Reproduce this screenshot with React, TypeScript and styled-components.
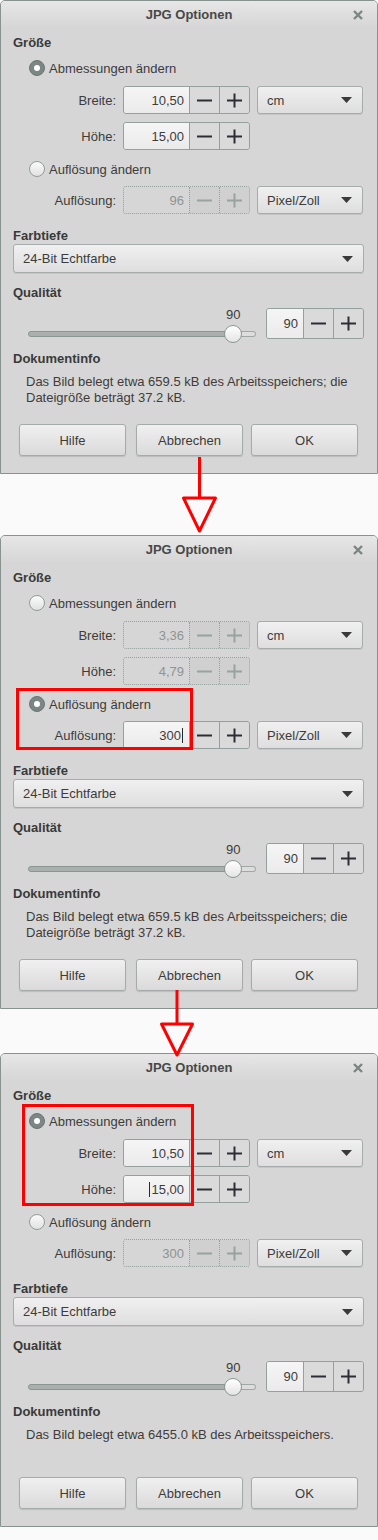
import styled, { createGlobalStyle } from "styled-components";

const GlobalStyle = createGlobalStyle`
  html, body {
    margin: 0;
    padding: 0;
    background: #fafafa;
  }
  body {
    font-family: "Liberation Sans", Arial, sans-serif;
    font-size: 13px;
    color: #3c3c3c;
  }
`;

type Box = { left: number; top: number; width: number; height: number };

type DialogState = {
  mode: "size" | "res";
  width: string;
  height: string;
  res: string;
  caret?: "height" | "res";
  info: string;
  highlight?: Box;
};

const Page = styled.div`
  display: flex;
  flex-direction: column;
  width: 378px;
`;

const Window = styled.div`
  position: relative;
  box-sizing: border-box;
  flex-shrink: 0;
  display: flex;
  flex-direction: column;
  width: 378px;
  height: 474px;
  background: #d6d6d6;
  border: 1px solid #88928f;
  border-radius: 5px 5px 0 0;
`;

const TitleBar = styled.div`
  display: grid;
  grid-template-columns: 1fr auto 1fr;
  align-items: center;
  height: 27px;
  padding: 0 14px;
  border-radius: 4px 4px 0 0;
  background: linear-gradient(#e7e7e7, #dcdcdc 60%, #d6d6d6);
  font-weight: bold;
  color: #484848;

  span {
    grid-column: 2;
  }

  svg {
    justify-self: end;
  }
`;

const Body = styled.div`
  display: flex;
  flex-direction: column;
  padding: 7px 13px 0 12px;
`;

const Heading = styled.div<{ $top?: number }>`
  margin-top: ${(p) => p.$top ?? 0}px;
  line-height: 16px;
  font-weight: bold;
  color: #3a3a3a;
`;

const RadioRow = styled.label<{ $top: number }>`
  display: flex;
  align-items: center;
  gap: 4px;
  height: 18px;
  margin-top: ${(p) => p.$top}px;
  padding-left: 16px;
`;

const RadioDot = styled.span<{ $on: boolean }>`
  box-sizing: border-box;
  display: flex;
  align-items: center;
  justify-content: center;
  width: 16px;
  height: 16px;
  border-radius: 50%;
  border: 1px solid ${(p) => (p.$on ? "#6b7573" : "#939c9a")};
  background: ${(p) =>
    p.$on ? "#7c8684" : "linear-gradient(#fbfbfb, #e1e1e1)"};

  &::after {
    content: "";
    display: ${(p) => (p.$on ? "block" : "none")};
    width: 6px;
    height: 6px;
    border-radius: 50%;
    background: #ffffff;
  }
`;

const FieldRow = styled.div<{ $top: number }>`
  display: flex;
  align-items: center;
  height: 28px;
  margin-top: ${(p) => p.$top}px;
  padding-left: 36px;
`;

const FieldLabel = styled.span`
  width: 67px;
  margin-right: 7px;
  text-align: right;
`;

const Spin = styled.div<{ $off?: boolean; $h?: number }>`
  box-sizing: border-box;
  display: flex;
  flex-shrink: 0;
  height: ${(p) => p.$h ?? 28}px;
  border: 1px ${(p) => (p.$off ? "dotted" : "solid")} #93a09d;
  border-radius: 3px;
  overflow: hidden;
`;

const SpinEntry = styled.div<{ $w: number; $off?: boolean }>`
  box-sizing: border-box;
  display: flex;
  align-items: center;
  justify-content: flex-end;
  width: ${(p) => p.$w}px;
  padding-right: 5px;
  background: ${(p) =>
    p.$off ? "#d6d6d6" : "linear-gradient(#f5f5f5, #ebebeb)"};
  color: ${(p) => (p.$off ? "#8e9492" : "#3c3c3c")};
`;

const StepButton = styled.div<{ $off?: boolean }>`
  display: flex;
  align-items: center;
  justify-content: center;
  width: 29px;
  border-left: 1px ${(p) => (p.$off ? "dotted" : "solid")} #93a09d;
  background: ${(p) => (p.$off ? "#cfd0cf" : "#dadada")};
  color: ${(p) => (p.$off ? "#98a2a0" : "#2d2d36")};
`;

const Caret = styled.span`
  display: inline-block;
  width: 1px;
  height: 15px;
  margin: 0 1px;
  background: #2a2a2a;
`;

const Combo = styled.div<{ $w?: number; $h?: number; $gap?: number }>`
  box-sizing: border-box;
  display: flex;
  align-items: center;
  justify-content: space-between;
  width: ${(p) => (p.$w ? `${p.$w}px` : "100%")};
  height: ${(p) => p.$h ?? 28}px;
  margin-left: ${(p) => p.$gap ?? 0}px;
  padding: 0 10px 0 9px;
  border: 1px solid #a6acab;
  border-radius: 3px;
  background: linear-gradient(#f0f0f0, #dedede);
  box-shadow: 0 1px 0 rgba(0, 0, 0, 0.08);
`;

const ScaleRow = styled.div`
  display: flex;
  align-items: flex-start;
  margin-top: 6px;
`;

const Scale = styled.div`
  display: flex;
  flex-direction: column;
  width: 228px;
  margin-left: 15px;
`;

const ScaleValue = styled.div`
  height: 16px;
  line-height: 16px;

  span {
    display: inline-block;
    transform: translateX(-50%);
  }
`;

const TrackArea = styled.div`
  position: relative;
  display: flex;
  align-items: center;
  height: 22px;
`;

const Track = styled.div`
  display: flex;
  width: 100%;
  height: 6px;
`;

const TrackFill = styled.div`
  box-sizing: border-box;
  background: #a9b0ae;
  border: 1px solid #8b9593;
  border-radius: 3px 0 0 3px;
`;

const TrackRest = styled.div`
  box-sizing: border-box;
  flex: 1;
  background: #dddddd;
  border: 1px solid #a0a8a6;
  border-left: none;
  border-radius: 0 3px 3px 0;
`;

const Thumb = styled.div`
  position: absolute;
  top: 2px;
  box-sizing: border-box;
  width: 18px;
  height: 18px;
  margin-left: -9px;
  border-radius: 50%;
  border: 1px solid #8c9694;
  background: linear-gradient(#ffffff, #e4e4e4);
`;

const QualitySpin = styled(Spin)`
  margin-left: auto;
  margin-top: 1px;
`;

const InfoText = styled.p`
  min-height: 32px;
  margin: 7px 0 0;
  padding-left: 13px;
  line-height: 16px;
  color: #433b39;
`;

const ButtonRow = styled.div`
  display: flex;
  gap: 8px;
  margin-top: 18px;
  padding: 0 6px;
`;

const DialogButton = styled.div<{ $wide?: boolean }>`
  box-sizing: border-box;
  display: flex;
  align-items: center;
  justify-content: center;
  width: 107px;
  height: 32px;
  margin-right: ${(p) => (p.$wide ? 2 : 0)}px;
  border: 1px solid #a5abaa;
  border-radius: 3px;
  background: linear-gradient(#f0f0f0, #dadada);
  box-shadow: 0 1px 1px rgba(0, 0, 0, 0.12);
`;

const Highlight = styled.div<{ $box: Box }>`
  position: absolute;
  left: ${(p) => p.$box.left}px;
  top: ${(p) => p.$box.top}px;
  width: ${(p) => p.$box.width}px;
  height: ${(p) => p.$box.height}px;
  box-sizing: border-box;
  border: 3px solid #ff0000;
  pointer-events: none;
`;

const Connector = styled.div<{ $h: number }>`
  position: relative;
  z-index: 2;
  flex-shrink: 0;
  height: ${(p) => p.$h}px;
`;

const ArrowSvg = styled.svg<{ $left: number; $lift: number }>`
  display: block;
  margin-left: ${(p) => p.$left}px;
  margin-top: -${(p) => p.$lift}px;
  overflow: visible;
`;

const Minus = () => (
  <svg width="15" height="15" viewBox="0 0 15 15">
    <path d="M0 7.5h15" stroke="currentColor" strokeWidth="2" />
  </svg>
);

const Plus = () => (
  <svg width="15" height="15" viewBox="0 0 15 15">
    <path d="M0 7.5h15M7.5 0.5v14" stroke="currentColor" strokeWidth="2" />
  </svg>
);

const DropArrow = () => (
  <svg width="11" height="6" viewBox="0 0 11 6">
    <path d="M0 0h11L5.5 6z" fill="#3a3a3a" />
  </svg>
);

const CloseIcon = () => (
  <svg width="10" height="10" viewBox="0 0 10 10">
    <path d="M1 1l8 8M9 1l-8 8" stroke="#7b8583" strokeWidth="2.4" />
  </svg>
);

const SpinBox = ({
  value,
  width,
  off,
  caret,
  height,
}: {
  value: string;
  width: number;
  off?: boolean;
  caret?: "start" | "end";
  height?: number;
}) => (
  <Spin $off={off} $h={height}>
    <SpinEntry $w={width} $off={off}>
      {caret === "start" && <Caret />}
      {value}
      {caret === "end" && <Caret />}
    </SpinEntry>
    <StepButton $off={off}>
      <Minus />
    </StepButton>
    <StepButton $off={off}>
      <Plus />
    </StepButton>
  </Spin>
);

const Arrow = ({
  left,
  headW,
  lineLen,
  headH,
  lift,
}: {
  left: number;
  headW: number;
  lineLen: number;
  headH: number;
  lift: number;
}) => {
  const cx = headW / 2;
  return (
    <ArrowSvg
      $left={left}
      $lift={lift}
      width={headW}
      height={lineLen + headH}
      viewBox={`0 0 ${headW} ${lineLen + headH}`}
    >
      <path d={`M${cx} 0V${lineLen}`} stroke="#ff0000" strokeWidth="3" />
      <polygon
        points={`1.5,${lineLen} ${headW - 1.5},${lineLen} ${cx},${lineLen + headH - 2}`}
        fill="none"
        stroke="#ff0000"
        strokeWidth="3"
        strokeLinejoin="round"
      />
    </ArrowSvg>
  );
};

const quality = 90;

const JpgDialog = ({ state }: { state: DialogState }) => {
  const sizeOff = state.mode !== "size";
  return (
    <Window>
      <TitleBar>
        <span>JPG Optionen</span>
        <CloseIcon />
      </TitleBar>
      <Body>
        <Heading>Größe</Heading>
        <RadioRow $top={8}>
          <RadioDot $on={state.mode === "size"} />
          Abmessungen ändern
        </RadioRow>
        <FieldRow $top={9}>
          <FieldLabel>Breite:</FieldLabel>
          <SpinBox value={state.width} width={65} off={sizeOff} />
          <Combo $w={106} $gap={7}>
            cm
            <DropArrow />
          </Combo>
        </FieldRow>
        <FieldRow $top={8}>
          <FieldLabel>Höhe:</FieldLabel>
          <SpinBox
            value={state.height}
            width={65}
            off={sizeOff}
            caret={state.caret === "height" ? "start" : undefined}
          />
        </FieldRow>
        <RadioRow $top={10}>
          <RadioDot $on={state.mode === "res"} />
          Auflösung ändern
        </RadioRow>
        <FieldRow $top={8}>
          <FieldLabel>Auflösung:</FieldLabel>
          <SpinBox
            value={state.res}
            width={65}
            off={!sizeOff}
            caret={state.caret === "res" ? "end" : undefined}
          />
          <Combo $w={106} $gap={7}>
            Pixel/Zoll
            <DropArrow />
          </Combo>
        </FieldRow>

        <Heading $top={14}>Farbtiefe</Heading>
        <Combo $h={29}>
          24-Bit Echtfarbe
          <DropArrow />
        </Combo>

        <Heading $top={12}>Qualität</Heading>
        <ScaleRow>
          <Scale>
            <ScaleValue>
              <span style={{ marginLeft: `${quality}%` }}>{quality}</span>
            </ScaleValue>
            <TrackArea>
              <Track>
                <TrackFill style={{ width: `${quality}%` }} />
                <TrackRest />
              </Track>
              <Thumb style={{ left: `${quality}%` }} />
            </TrackArea>
          </Scale>
          <QualitySpin $h={31}>
            <SpinEntry $w={36}>{quality}</SpinEntry>
            <StepButton>
              <Minus />
            </StepButton>
            <StepButton>
              <Plus />
            </StepButton>
          </QualitySpin>
        </ScaleRow>

        <Heading $top={6}>Dokumentinfo</Heading>
        <InfoText>{state.info}</InfoText>

        <ButtonRow>
          <DialogButton $wide>Hilfe</DialogButton>
          <DialogButton>Abbrechen</DialogButton>
          <DialogButton>OK</DialogButton>
        </ButtonRow>
      </Body>
      {state.highlight && <Highlight $box={state.highlight} />}
    </Window>
  );
};

const twoLines =
  "Das Bild belegt etwa 659.5 kB des Arbeitsspeichers; die Dateigröße beträgt 37.2 kB.";

const dialogs: DialogState[] = [
  { mode: "size", width: "10,50", height: "15,00", res: "96", info: twoLines },
  {
    mode: "res",
    width: "3,36",
    height: "4,79",
    res: "300",
    caret: "res",
    info: twoLines,
    highlight: { left: 15, top: 152, width: 177, height: 62 },
  },
  {
    mode: "size",
    width: "10,50",
    height: "15,00",
    res: "300",
    caret: "height",
    info: "Das Bild belegt etwa 6455.0 kB des Arbeitsspeichers.",
    highlight: { left: 21, top: 50, width: 172, height: 102 },
  },
];

const App = () => {
  return (
    <Page>
      <GlobalStyle />
      <JpgDialog state={dialogs[0]} />
      <Connector $h={61}>
        <Arrow left={182} headW={35} lineLen={41} headH={35} lift={17} />
      </Connector>
      <JpgDialog state={dialogs[1]} />
      <Connector $h={44}>
        <Arrow left={160} headW={34} lineLen={34} headH={33} lift={19} />
      </Connector>
      <JpgDialog state={dialogs[2]} />
    </Page>
  );
};

export default App;
